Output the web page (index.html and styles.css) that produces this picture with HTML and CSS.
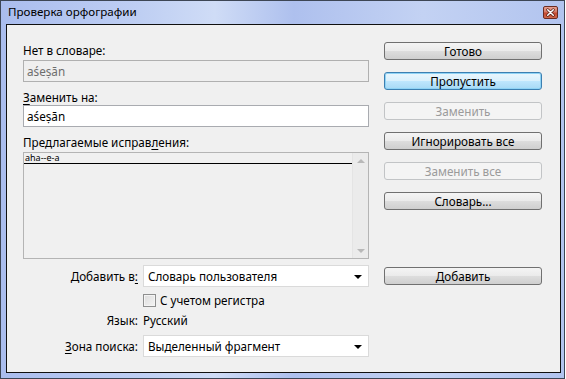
FILE: index.html
```html
<!DOCTYPE html>
<html lang="ru">
<head>
    <meta charset="UTF-8">
    <title>Проверка орфографии</title>
    <link rel="stylesheet" href="styles.css">
</head>
<body>
    <div class="window">
        <div class="titlebar">
            <span class="title">Проверка орфографии</span>
            <span class="close-btn">
                <svg width="14" height="13" viewBox="0 0 14 13">
                    <path d="M4 3.5 L10 9.5 M10 3.5 L4 9.5" stroke="#5a1e14" stroke-width="3.2" stroke-linecap="round"/>
                    <path d="M4 3.5 L10 9.5 M10 3.5 L4 9.5" stroke="#ffffff" stroke-width="1.6" stroke-linecap="round"/>
                </svg>
            </span>
        </div>

        <div class="client">
            <div class="top">
                <div class="fields">
                    <div class="label">Нет в словаре:</div>
                    <div class="field disabled">aśeṣān</div>

                    <div class="label spaced"><u>З</u>аменить на:</div>
                    <div class="field">aśeṣān</div>

                    <div class="label spaced">Предлагаемые исправ<u>л</u>ения:</div>
                    <div class="list">
                        <div class="items">
                            <div class="item">aha--e-a</div>
                        </div>
                        <div class="scrollbar">
                            <span class="arrow up"></span>
                            <span class="arrow down"></span>
                        </div>
                    </div>
                </div>

                <div class="buttons">
                    <button class="btn">Готово</button>
                    <button class="btn focused">Пропустить</button>
                    <button class="btn" disabled>Заменить</button>
                    <button class="btn">Игнорировать все</button>
                    <button class="btn" disabled>Заменить все</button>
                    <button class="btn">Словарь...</button>
                </div>
            </div>

            <div class="bottom">
                <div class="row combo-row">
                    <span class="row-label">Добавить в<u>:</u></span>
                    <div class="combo">
                        <span>Словарь пользователя</span>
                        <span class="combo-arrow"></span>
                    </div>
                    <button class="btn add-btn">Добавить</button>
                </div>

                <div class="row check-row">
                    <span class="row-label"></span>
                    <label class="check">
                        <span class="check-box"></span>
                        С учетом регистра
                    </label>
                </div>

                <div class="row lang-row">
                    <span class="row-label">Язык:</span>
                    <span class="value">Русский</span>
                </div>

                <div class="row combo-row last">
                    <span class="row-label"><u>З</u>она поиска:</span>
                    <div class="combo">
                        <span>Выделенный фрагмент</span>
                        <span class="combo-arrow"></span>
                    </div>
                </div>
            </div>
        </div>
    </div>
</body>
</html>
```

FILE: styles.css
```css
* {
    margin: 0;
    padding: 0;
    box-sizing: border-box;
}

body {
    background: #ffffff;
    font-family: "Noto Sans", "Open Sans", sans-serif;
    font-size: 11.7px;
    color: #000;
}

.window {
    width: 565px;
    height: 379px;
    border: 1px solid #3d4655;
    background: linear-gradient(to right, #aabdee 0%, #bfcff3 25%, #cfdcf6 38%, #aec0ee 52%, #c3d2f3 75%, #b2c4ef 100%);
    display: flex;
    flex-direction: column;
}

.titlebar {
    height: 23px;
    display: flex;
    align-items: center;
    justify-content: space-between;
    padding: 0 6px 2px 7px;
}

.title {
    font-size: 11.6px;
    color: #000;
}

.close-btn {
    width: 15px;
    height: 13px;
    border: 1px solid #6b2c22;
    border-radius: 2px;
    background: linear-gradient(#e8a294 0%, #d47a66 45%, #c4492f 55%, #cf6a4e 100%);
    display: flex;
    align-items: center;
    justify-content: center;
    margin-top: 2px;
}

.close-btn svg {
    display: block;
}

.client {
    flex: 1;
    margin: 0 3px 5px 5px;
    border: 1px solid #101010;
    background: #f0f0f0;
    padding: 17px 16px 0 16px;
}

.top {
    display: flex;
    gap: 15px;
}

.fields {
    width: 346px;
    display: flex;
    flex-direction: column;
}

.label {
    height: 16px;
    line-height: 16px;
    margin-bottom: 2px;
}

.label.spaced {
    margin-top: 7px;
    margin-bottom: 0;
}

.label u,
.row-label u {
    text-decoration-thickness: 1px;
    text-underline-offset: 2px;
}

.field {
    height: 22px;
    line-height: 20px;
    border: 1px solid #a9abb0;
    background: #ffffff;
    padding-left: 3px;
}

.field.disabled {
    background: #efefef;
    color: #6d6d6d;
    border-color: #b0b0b0;
}

.list {
    margin-top: 2px;
    height: 107px;
    border: 1px solid #b4b4b4;
    background: #f0f0f0;
    display: flex;
}

.items {
    flex: 1;
}

.item {
    font-size: 9px;
    line-height: 10px;
    padding-left: 1px;
    border-bottom: 1px solid #000;
}

.scrollbar {
    width: 16px;
    border-left: 1px solid #e4e4e4;
    background: #ebebeb;
    display: flex;
    flex-direction: column;
    justify-content: space-between;
    align-items: center;
    padding: 6px 0 5px;
}

.arrow {
    width: 0;
    height: 0;
    border-left: 4px solid transparent;
    border-right: 4px solid transparent;
}

.arrow.up {
    border-bottom: 4px solid #b8b8b8;
}

.arrow.down {
    border-top: 4px solid #b8b8b8;
}

.buttons {
    width: 158px;
    display: flex;
    flex-direction: column;
    gap: 12px;
}

.btn {
    width: 158px;
    height: 18px;
    border: 1px solid #707070;
    border-radius: 3px;
    background: linear-gradient(#f4f4f4 0%, #ebebeb 48%, #dddddd 52%, #cfcfcf 100%);
    font-family: inherit;
    font-size: 11.7px;
    line-height: 15px;
    color: #000;
}

.btn.focused {
    border-color: #3c7fb1;
    background: linear-gradient(#eaf6fd 0%, #d9f0fc 48%, #bee6fd 52%, #a7d9f5 100%);
    box-shadow: inset 0 0 0 1px #8fd3f5;
}

.btn:disabled {
    border-color: #c2c4c6;
    background: #f4f4f4;
    color: #9b9b9b;
}

.bottom {
    margin-top: 6px;
    display: flex;
    flex-direction: column;
}

.row {
    display: flex;
    align-items: center;
}

.row-label {
    width: 115px;
    text-align: right;
    margin-right: 5px;
}

.combo-row {
    height: 22px;
}

.combo-row.last {
    margin-top: 7px;
}

.check-row,
.lang-row {
    height: 16px;
}

.check-row {
    margin-top: 5px;
}

.lang-row {
    margin-top: 4px;
}

.combo {
    width: 226px;
    height: 22px;
    border: 1px solid #dadada;
    background: #ffffff;
    display: flex;
    align-items: center;
    justify-content: space-between;
    padding: 0 6px 0 4px;
}

.combo-arrow {
    width: 0;
    height: 0;
    border-left: 4px solid transparent;
    border-right: 4px solid transparent;
    border-top: 4px solid #000;
    margin-top: 2px;
}

.add-btn {
    margin-left: 15px;
}

.check {
    display: flex;
    align-items: center;
    gap: 4px;
}

.check-box {
    width: 13px;
    height: 13px;
    border: 1px solid #8e8f8f;
    background: linear-gradient(135deg, #dcdcdc 0%, #f4f4f4 100%);
    box-shadow: inset 0 0 0 1px #f4f4f4;
}
```
